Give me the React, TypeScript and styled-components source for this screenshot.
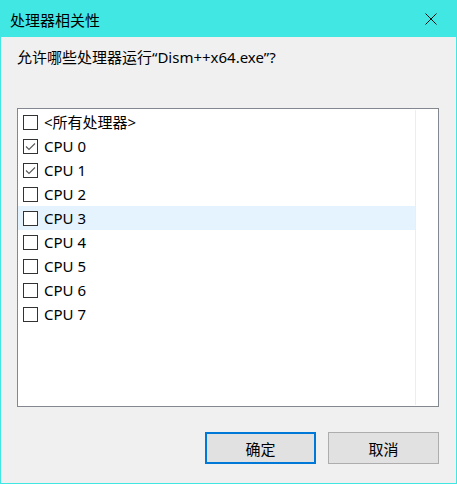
import React from "react";
import styled, { createGlobalStyle } from "styled-components";

const GlobalStyle = createGlobalStyle`
  html, body {
    margin: 0;
    padding: 0;
    background: #f0f0f0;
  }
  * {
    box-sizing: border-box;
  }
`;

const cpus = [
  { label: "<所有处理器>", checked: false },
  { label: "CPU 0", checked: true },
  { label: "CPU 1", checked: true },
  { label: "CPU 2", checked: false },
  { label: "CPU 3", checked: false, hover: true },
  { label: "CPU 4", checked: false },
  { label: "CPU 5", checked: false },
  { label: "CPU 6", checked: false },
  { label: "CPU 7", checked: false },
];

const App = () => {
  return (
    <Window>
      <GlobalStyle />
      <TitleBar>
        <Title>处理器相关性</Title>
        <CloseButton>
          <svg width="12" height="12" viewBox="0 0 12 12">
            <path d="M0.5 0.5 L11.5 11.5 M11.5 0.5 L0.5 11.5" stroke="#111" strokeWidth="1" />
          </svg>
        </CloseButton>
      </TitleBar>
      <Body>
        <Prompt>允许哪些处理器运行“Dism++x64.exe”?</Prompt>
        <ListBox>
          <ListColumn>
            {cpus.map((c) => (
              <Row key={c.label} $hover={c.hover}>
                <Check>
                  {c.checked && (
                    <svg width="13" height="13" viewBox="0 0 13 13">
                      <polyline points="2,6.5 5,9.5 11,3.5" fill="none" stroke="#5a5a5a" strokeWidth="1.1" />
                    </svg>
                  )}
                </Check>
                <Label>{c.label}</Label>
              </Row>
            ))}
          </ListColumn>
        </ListBox>
        <Buttons>
          <Button $primary>确定</Button>
          <Button>取消</Button>
        </Buttons>
      </Body>
    </Window>
  );
};

export default App;

const Window = styled.div`
  width: 457px;
  height: 484px;
  border: 1px solid #41e8e3;
  background: #f0f0f0;
  display: flex;
  flex-direction: column;
  font-family: "Noto Sans", "Noto Sans CJK SC", sans-serif;
  color: #000;
`;

const TitleBar = styled.div`
  height: 36px;
  background: #41e8e3;
  display: flex;
  align-items: center;
  justify-content: space-between;
  padding: 0 0 0 9px;
`;

const Title = styled.div`
  font-size: 15px;
  margin-top: 1px;
`;

const CloseButton = styled.div`
  width: 46px;
  height: 36px;
  display: flex;
  align-items: center;
  justify-content: center;
  margin-right: 2px;
`;

const Body = styled.div`
  flex: 1;
  display: flex;
  flex-direction: column;
  padding: 10px 17px 0 16px;
`;

const Prompt = styled.div`
  font-size: 15px;
  line-height: 20px;
  height: 20px;
`;

const ListBox = styled.div`
  margin-top: 41px;
  width: 422px;
  height: 299px;
  border: 1px solid #828790;
  background: #fff;
  padding: 1px 22px 1px 0;
  display: flex;
`;

const ListColumn = styled.div`
  width: 399px;
  border-right: 1px solid #e5effb;
  display: flex;
  flex-direction: column;
`;

const Row = styled.div<{ $hover?: boolean }>`
  height: 24px;
  display: flex;
  align-items: center;
  padding-left: 5px;
  background: ${(p) => (p.$hover ? "#e5f3ff" : "transparent")};
`;

const Check = styled.div`
  width: 15px;
  height: 15px;
  border: 1px solid #333;
  background: #fff;
  display: flex;
  align-items: center;
  justify-content: center;
`;

const Label = styled.span`
  margin-left: 6px;
  font-size: 15px;
  line-height: 20px;
`;

const Buttons = styled.div`
  margin-top: 25px;
  display: flex;
  justify-content: flex-end;
  gap: 12px;
`;

const Button = styled.div<{ $primary?: boolean }>`
  width: 111px;
  height: 32px;
  background: #e1e1e1;
  border: ${(p) => (p.$primary ? "2px solid #0078d7" : "1px solid #adadad")};
  display: flex;
  align-items: center;
  justify-content: center;
  font-size: 15px;
`;
